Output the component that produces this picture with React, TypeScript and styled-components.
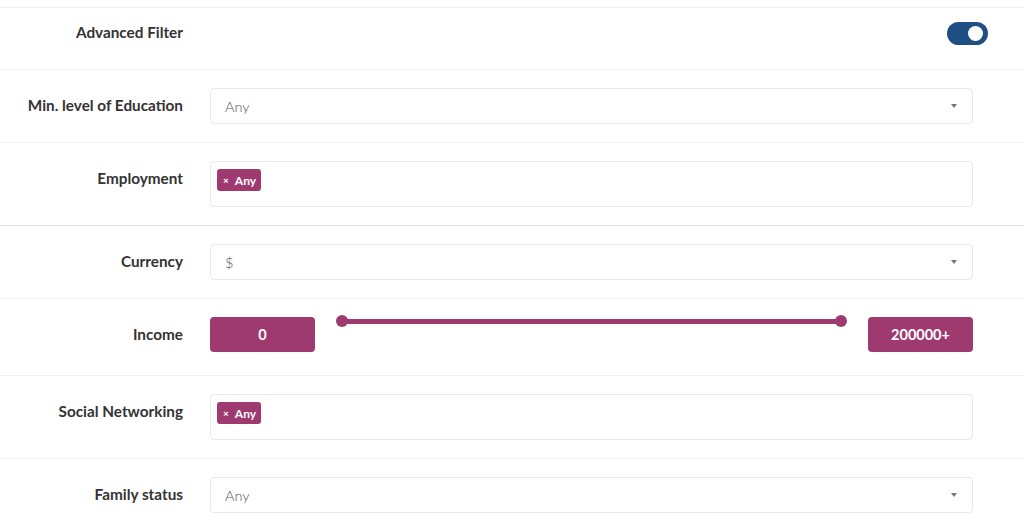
import React from "react";
import styled, { createGlobalStyle } from "styled-components";

const GlobalStyle = createGlobalStyle`
  body {
    margin: 0;
    background: #ffffff;
    font-family: Lato, "Open Sans", sans-serif;
    color: #333333;
  }
`;

const PURPLE = "#9e3a6f";

interface RowProps {
  $strong?: boolean;
  $pad?: string;
}

const Page = styled.div`
  margin-top: 7px;
  border-top: 1px solid #f0f0f0;
`;

const Row = styled.div<RowProps>`
  display: grid;
  grid-template-columns: 183px 1fr;
  column-gap: 27px;
  padding: ${p => p.$pad || "18px"} 51px 18px 0;
  border-bottom: 1px solid ${p => (p.$strong ? "#e4e4e4" : "#f1f1f1")};
  align-items: flex-start;
`;

const Label = styled.div`
  text-align: right;
  font-size: 15.3px;
  font-weight: 700;
  line-height: 34px;
  color: #333333;
  white-space: nowrap;
`;

const ToggleCell = styled.div`
  display: flex;
  justify-content: flex-end;
  align-items: center;
  height: 36px;
  margin-right: -15px;
`;

const Toggle = styled.div`
  width: 41px;
  height: 23px;
  border-radius: 12px;
  background: #1f4f82;
  display: flex;
  align-items: center;
  justify-content: flex-end;
  padding: 0 5px;
  box-sizing: border-box;
`;

const Knob = styled.div`
  width: 15px;
  height: 15px;
  border-radius: 50%;
  background: #ffffff;
`;

const SelectBox = styled.div`
  height: 36px;
  box-sizing: border-box;
  border: 1px solid #e8e8e8;
  border-radius: 4px;
  background: #ffffff;
  display: flex;
  align-items: center;
  justify-content: space-between;
  padding: 0 15px 0 14px;
  font-size: 14.5px;
  font-weight: 300;
  color: #555555;
`;

const Caret = styled.span`
  width: 0;
  height: 0;
  border-left: 3.5px solid transparent;
  border-right: 3.5px solid transparent;
  border-top: 4px solid #777777;
`;

const MultiBox = styled.div`
  height: 46px;
  box-sizing: border-box;
  border: 1px solid #e8e8e8;
  border-radius: 4px;
  background: #ffffff;
  padding: 7px 7px 7px 6px;
  display: flex;
  align-items: flex-start;
`;

const Tag = styled.span`
  display: inline-flex;
  align-items: center;
  gap: 6px;
  height: 22px;
  padding: 0 5px 0 6px;
  border-radius: 3px;
  background: ${PURPLE};
  color: #ffffff;
  font-size: 12px;
  font-weight: 700;
`;

const TagX = styled.span`
  font-size: 10px;
`;

const RangeRow = styled.div`
  display: flex;
  align-items: flex-start;
  height: 40px;
`;

const ValueButton = styled.div`
  width: 105px;
  height: 35px;
  border-radius: 4px;
  background: ${PURPLE};
  color: #ffffff;
  font-size: 14.5px;
  font-weight: 700;
  display: flex;
  align-items: center;
  justify-content: center;
  flex-shrink: 0;
`;

const Slider = styled.div`
  flex: 1;
  display: flex;
  align-items: center;
  margin: -2px 21px 0;
`;

const Handle = styled.div`
  width: 12px;
  height: 12px;
  border-radius: 50%;
  background: ${PURPLE};
  flex-shrink: 0;
`;

const Track = styled.div`
  flex: 1;
  height: 5px;
  margin: 0 -2px;
  background: ${PURPLE};
`;

const Select: React.FC<{ value: string }> = ({ value }) => (
  <SelectBox>
    <span>{value}</span>
    <Caret />
  </SelectBox>
);

const Multi: React.FC<{ tags: string[] }> = ({ tags }) => (
  <MultiBox>
    {tags.map(t => (
      <Tag key={t}>
        <TagX>×</TagX>
        {t}
      </Tag>
    ))}
  </MultiBox>
);

export default function App() {
  return (
    <>
      <GlobalStyle />
      <Page>
        <Row $pad="7px">
          <Label>Advanced Filter</Label>
          <ToggleCell>
            <Toggle>
              <Knob />
            </Toggle>
          </ToggleCell>
        </Row>
        <Row>
          <Label>Min. level of Education</Label>
          <Select value="Any" />
        </Row>
        <Row $strong>
          <Label>Employment</Label>
          <Multi tags={["Any"]} />
        </Row>
        <Row>
          <Label>Currency</Label>
          <Select value="$" />
        </Row>
        <Row>
          <Label>Income</Label>
          <RangeRow>
            <ValueButton>0</ValueButton>
            <Slider>
              <Handle />
              <Track />
              <Handle />
            </Slider>
            <ValueButton>200000+</ValueButton>
          </RangeRow>
        </Row>
        <Row>
          <Label>Social Networking</Label>
          <Multi tags={["Any"]} />
        </Row>
        <Row>
          <Label>Family status</Label>
          <Select value="Any" />
        </Row>
      </Page>
    </>
  );
}
